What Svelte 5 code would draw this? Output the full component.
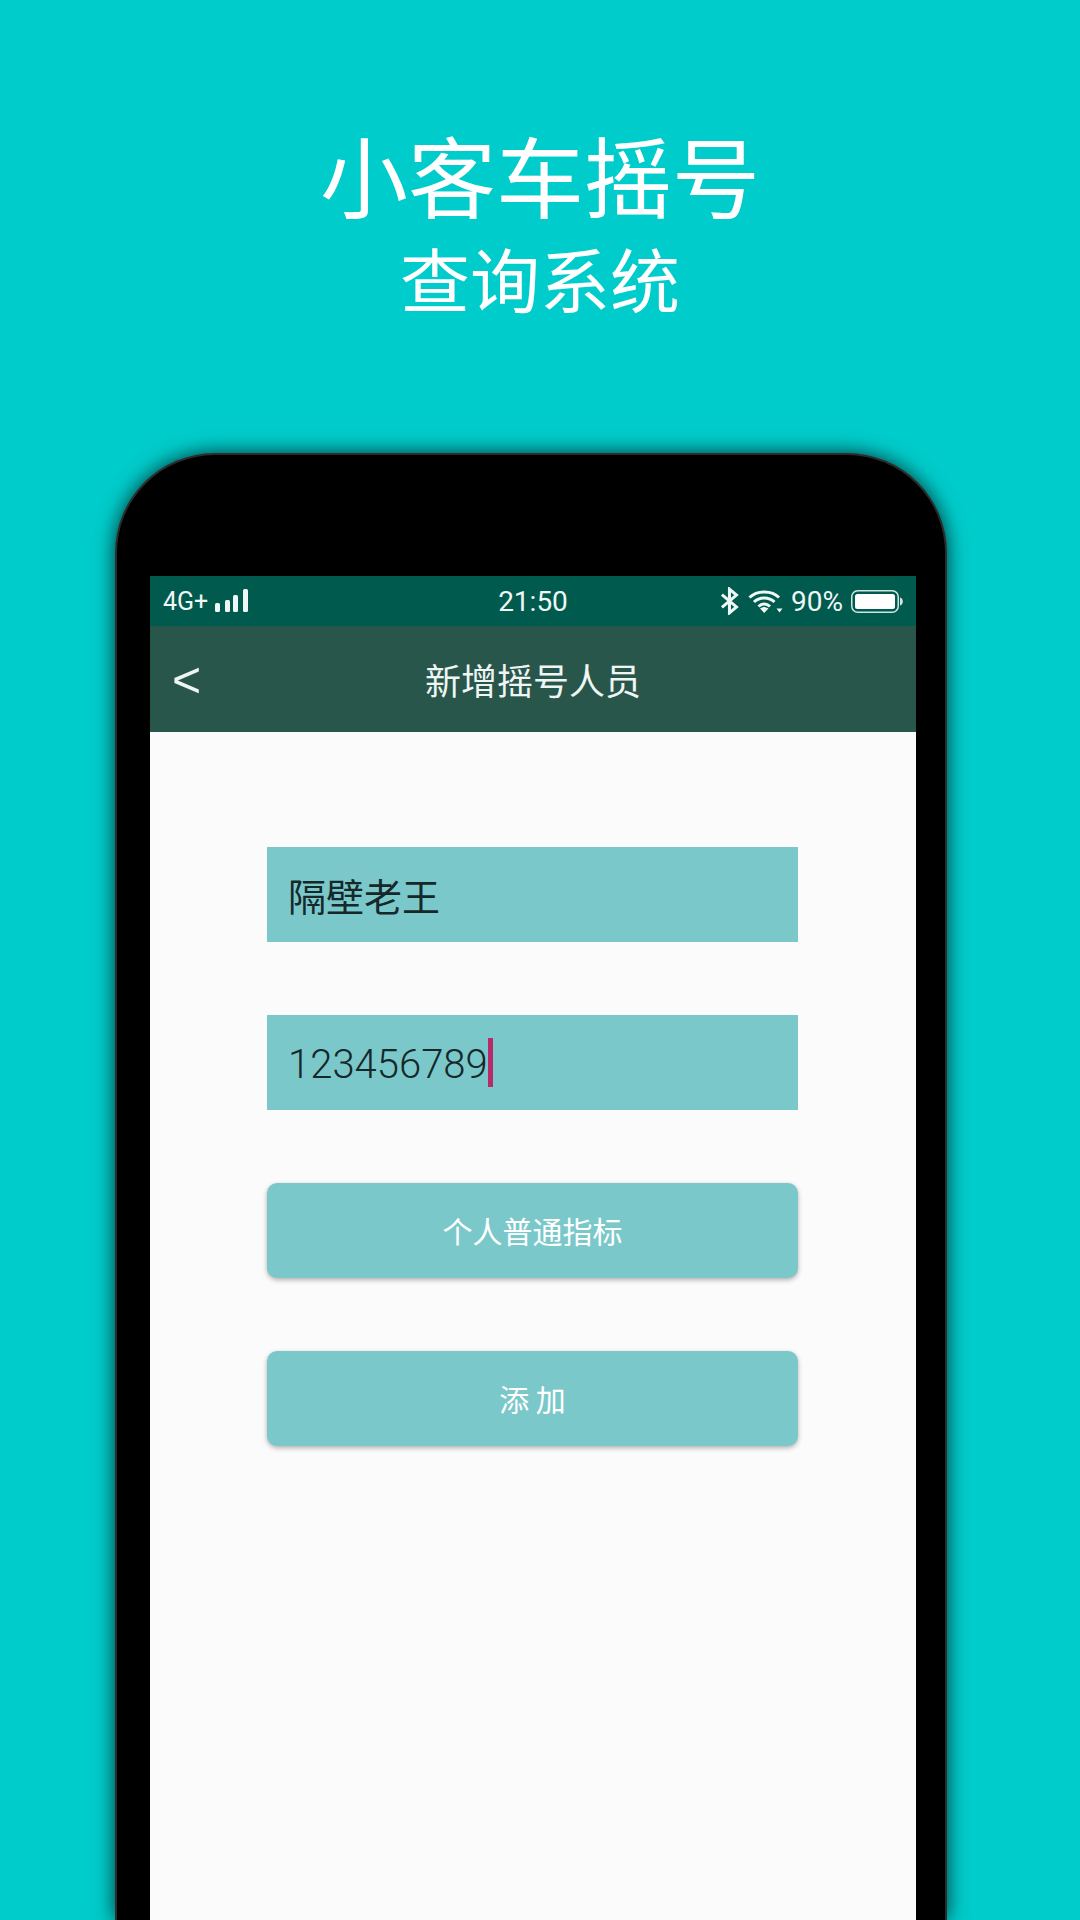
<script>
    let name = '隔壁老王';
    let phone = '123456789';
    let plan = '个人普通指标';
</script>

<div class="poster">
    <header class="headline">
        <h1>小客车摇号</h1>
        <h2>查询系统</h2>
    </header>

    <div class="device">
        <div class="screen">
            <div class="status">
                <div class="status-left">
                    <span class="net">4G+</span>
                    <svg class="signal" width="34" height="24" viewBox="0 0 34 24" fill="#eef7f5">
                        <rect x="0" y="14" width="5" height="9" rx="1.5" />
                        <rect x="10" y="11" width="5" height="12" rx="1.5" />
                        <rect x="18" y="6" width="5" height="17" rx="1.5" />
                        <rect x="28" y="0" width="5" height="23" rx="1.5" />
                    </svg>
                </div>
                <span class="time">21:50</span>
                <div class="status-right">
                    <svg width="20" height="28" viewBox="0 0 18 26" fill="none" stroke="#eef7f5" stroke-width="2.8">
                        <path d="M1.5 7 L15 18.5 L8.5 24 V2 L15 7.5 L1.5 19" />
                    </svg>
                    <svg class="wifi" width="35" height="24" viewBox="0 0 35 24" fill="none" stroke="#eef7f5" stroke-width="3">
                        <path d="M1.5 8.5 C9 1 24 1 31 8.5" />
                        <path d="M6 13 C11.5 7.5 21 7.5 26.5 13" />
                        <path d="M10.5 17.5 C14 14 18.5 14 22 17.5" />
                        <path d="M12 19.5 L16.2 24 L20.5 19.5 C17.5 17.5 15 17.5 12 19.5 Z" fill="#eef7f5" stroke="none" />
                        <path d="M28.5 19.5 H34.5 L31.5 23.5 Z" fill="#eef7f5" stroke="none" />
                    </svg>
                    <span class="pct">90%</span>
                    <svg class="battery" width="52" height="23" viewBox="0 0 52 23">
                        <rect x="0.75" y="0.75" width="46.5" height="21.5" rx="6" fill="none" stroke="#cfe5e0" stroke-width="1.5" />
                        <rect x="4" y="4" width="40" height="15" rx="2.5" fill="#fff" />
                        <path d="M49 7.5 C51 8 51.8 9.5 51.8 11.5 C51.8 13.5 51 15 49 15.5 Z" fill="#cfe5e0" />
                    </svg>
                </div>
            </div>

            <div class="appbar">
                <span class="back">&lt;</span>
                <span class="title">新增摇号人员</span>
            </div>

            <form class="form" on:submit|preventDefault>
                <div class="field">{name}</div>
                <div class="field digits">
                    <span>{phone}</span><i class="caret"></i>
                </div>
                <button type="button">{plan}</button>
                <button type="submit">添 加</button>
            </form>
        </div>
    </div>
</div>

<style>
    :global(body) {
        margin: 0;
        background: #00cccb;
    }
    .poster {
        width: 1080px;
        height: 1920px;
        overflow: hidden;
        display: flex;
        flex-direction: column;
        background: #00cccb;
        font-family: Roboto, "Noto Sans CJK SC", sans-serif;
    }
    .headline {
        padding-top: 121px;
        text-align: center;
        color: #fff;
        font-family: "Noto Sans CJK SC", sans-serif;
    }
    h1 {
        margin: 0;
        font-size: 88px;
        font-weight: 400;
        line-height: 104px;
    }
    h2 {
        margin: 0;
        font-size: 70px;
        font-weight: 400;
        line-height: 106px;
    }
    .device {
        flex: 1;
        width: 832px;
        box-sizing: border-box;
        margin: 122px 0 0 115px;
        padding: 121px 29px 0 33px;
        background: #000;
        border: 2px solid #2c2c2c;
        border-bottom: none;
        border-radius: 100px 100px 0 0;
        box-shadow: 0 0 20px rgba(0, 0, 0, 0.75);
    }
    .screen {
        height: 100%;
        display: flex;
        flex-direction: column;
        background: #fbfbfb;
    }
    .status {
        height: 50px;
        flex: none;
        display: grid;
        grid-template-columns: 1fr auto 1fr;
        align-items: center;
        padding: 0 13px;
        background: #005a4e;
        color: #eef7f5;
    }
    .status-left {
        display: flex;
        align-items: center;
        gap: 7px;
    }
    .net {
        font-size: 25px;
    }
    .time {
        font-size: 28px;
    }
    .status-right {
        display: flex;
        align-items: center;
        justify-content: flex-end;
        gap: 8px;
    }
    .pct {
        font-size: 28px;
    }
    .appbar {
        height: 106px;
        flex: none;
        position: relative;
        display: flex;
        align-items: center;
        justify-content: center;
        background: #28564b;
        color: #eef5f3;
    }
    .back {
        position: absolute;
        left: 22px;
        top: 27px;
        font-size: 50px;
        line-height: 54px;
        font-family: "Liberation Sans", sans-serif;
    }
    .title {
        font-size: 36px;
        font-family: "Noto Sans CJK SC", sans-serif;
    }
    .form {
        display: flex;
        flex-direction: column;
        gap: 73.5px;
        width: 531px;
        padding: 115px 0 0 117px;
    }
    .field {
        height: 94.5px;
        box-sizing: border-box;
        display: flex;
        align-items: center;
        padding-left: 21px;
        background: #7bc8ca;
        color: #15282a;
        font-size: 38px;
    }
    .digits {
        font-size: 40px;
        font-weight: 300;
    }
    .digits span {
        padding-top: 5px;
    }
    .caret {
        width: 5px;
        height: 49px;
        background: #b92a6c;
    }
    button {
        height: 94.5px;
        border: none;
        border-radius: 10px;
        background: #7bc8ca;
        color: #fff;
        font: inherit;
        font-size: 30px;
        font-family: "Noto Sans CJK SC", sans-serif;
        box-shadow: 0 2px 5px rgba(0, 0, 0, 0.3);
    }
</style>
